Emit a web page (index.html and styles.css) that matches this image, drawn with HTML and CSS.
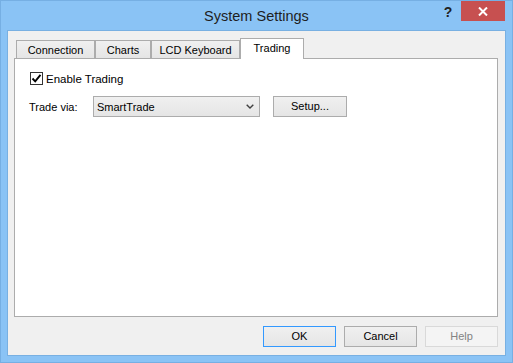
FILE: index.html
```html
<!DOCTYPE html>
<html>
<head>
<meta charset="utf-8">
<link rel="stylesheet" href="styles.css">
</head>
<body>
<div class="window">
  <div class="titlebar">
    <div class="spacer"></div>
    <div class="title">System Settings</div>
    <div class="caption-buttons">
      <div class="help">?</div>
      <div class="close">
        <svg width="10" height="9" viewBox="0 0 10 9"><path d="M1 0.5 L9 8.5 M9 0.5 L1 8.5" stroke="#fff" stroke-width="2" fill="none"/></svg>
      </div>
    </div>
  </div>
  <div class="client">
    <div class="tabs">
      <div class="tab tab-conn">Connection</div>
      <div class="tab tab-charts">Charts</div>
      <div class="tab tab-lcd">LCD Keyboard</div>
      <div class="tab tab-trading active">Trading</div>
    </div>
    <div class="panel">
      <div class="check-row">
        <span class="checkbox">
          <svg width="11" height="11" viewBox="0 0 11 11"><path d="M1.5 5.5 L4.2 8.3 L9.5 1.8" stroke="#000" stroke-width="1.9" fill="none"/></svg>
        </span>
        <span class="check-label">Enable Trading</span>
      </div>
      <div class="via-row">
        <span class="via-label">Trade via:</span>
        <div class="combo">
          <span class="combo-text">SmartTrade</span>
          <svg class="chev" width="8" height="5" viewBox="0 0 8 5"><path d="M0.7 0.7 L4 4 L7.3 0.7" stroke="#404040" stroke-width="1.4" fill="none"/></svg>
        </div>
        <div class="btn setup">Setup...</div>
      </div>
    </div>
    <div class="buttons">
      <div class="btn default">OK</div>
      <div class="btn">Cancel</div>
      <div class="btn disabled">Help</div>
    </div>
  </div>
</div>
</body>
</html>
```

FILE: styles.css
```css
html, body {
  margin: 0;
  padding: 0;
  background: #8ac3f5;
}
body {
  font-family: "Liberation Sans", Arial, sans-serif;
  font-size: 11px;
  color: #000;
}
.window {
  width: 513px;
  height: 363px;
  box-sizing: border-box;
  background: #8ac3f5;
  border: 1px solid #76afe3;
  display: flex;
  flex-direction: column;
}
.titlebar {
  height: 29px;
  display: grid;
  grid-template-columns: 1fr auto 1fr;
  padding-right: 7px;
}
.title {
  font-size: 14.5px;
  line-height: 30px;
  color: #1e1e1e;
  text-align: center;
  padding-left: 7px;
}
.caption-buttons {
  display: flex;
  justify-content: flex-end;
  align-items: flex-start;
}
.help {
  width: 26px;
  height: 20px;
  text-align: center;
  font-weight: bold;
  font-size: 14px;
  line-height: 22px;
  color: #222;
}
.close {
  width: 44px;
  height: 20px;
  background: #c75050;
  display: flex;
  align-items: center;
  justify-content: center;
}
.client {
  margin: 0 6px 6px 6px;
  flex: 1;
  background: #f0f0f0;
  border: 1px solid #78b0e2;
  display: flex;
  flex-direction: column;
}
.tabs {
  display: flex;
  align-items: flex-end;
  height: 20px;
  margin-top: 7px;
  padding-left: 8px;
}
.tab {
  box-sizing: border-box;
  height: 18px;
  border: 1px solid #acacac;
  border-bottom: none;
  background: linear-gradient(#f0f0f0, #e5e5e5);
  text-align: center;
  line-height: 18px;
}
.tab-conn { width: 79px; }
.tab-charts { width: 56px; }
.tab-lcd { width: 89px; }
.tab-trading { width: 64px; }
.tab.active {
  height: 21px;
  margin-bottom: -1px;
  background: #fff;
  position: relative;
  z-index: 1;
  line-height: 18px;
}
.panel {
  box-sizing: border-box;
  margin-left: 6px;
  width: 484px;
  height: 259px;
  background: #fff;
  border: 1px solid #acacac;
  padding-left: 14px;
}
.check-row {
  display: flex;
  align-items: center;
  height: 13px;
  margin-top: 13px;
}
.checkbox {
  box-sizing: border-box;
  width: 13px;
  height: 13px;
  margin-left: 1px;
  border: 1px solid #333;
  background: #fff;
  display: flex;
  align-items: center;
  justify-content: center;
}
.check-label {
  margin-left: 3px;
  font-size: 11.5px;
}
.via-row {
  display: flex;
  align-items: center;
  height: 21px;
  margin-top: 11px;
}
.via-label {
  width: 64px;
}
.combo {
  box-sizing: border-box;
  width: 167px;
  height: 21px;
  border: 1px solid #acacac;
  background: linear-gradient(#f0f0f0, #e5e5e5);
  display: flex;
  align-items: center;
  justify-content: space-between;
  padding: 0 5px 0 3px;
}
.btn {
  box-sizing: border-box;
  width: 73px;
  height: 21px;
  border: 1px solid #acacac;
  background: linear-gradient(#f0f0f0, #e5e5e5);
  text-align: center;
  line-height: 19px;
}
.setup {
  width: 74px;
  margin-left: 13px;
}
.buttons {
  display: flex;
  justify-content: flex-end;
  gap: 8px;
  margin-top: 9px;
  padding-right: 7px;
}
.btn.default {
  border-color: #3399ff;
}
.btn.disabled {
  border-color: #d9d9d9;
  background: #f4f4f4;
  color: #838383;
}
```
